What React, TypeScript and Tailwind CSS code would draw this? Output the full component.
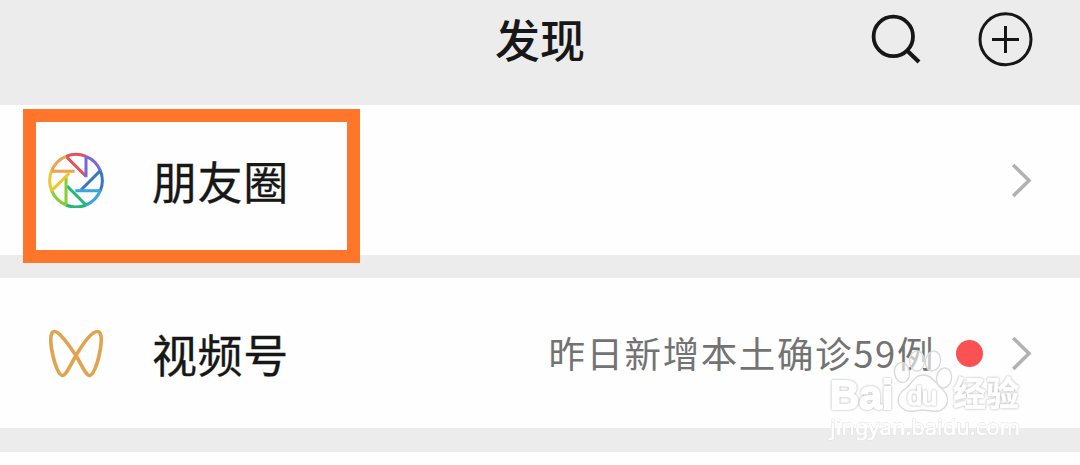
import React from "react";

type RowProps = {
  icon: React.ReactNode;
  title: string;
  children?: React.ReactNode;
};

const SearchIcon = () => (
  <svg className="w-[50px] h-[52px]" viewBox="0 0 50 52" fill="none" stroke="#161616">
    <circle cx="22.3" cy="24.4" r="19.7" strokeWidth="3.8" />
    <path d="M36 38.5L48 50" strokeWidth="4.2" />
  </svg>
);

const PlusIcon = () => (
  <svg className="w-[56px] h-[56px]" viewBox="0 0 56 56" fill="none" stroke="#161616" strokeWidth="3">
    <circle cx="27.5" cy="27.3" r="25.5" />
    <path d="M14 27.5H41M27.5 14V41" />
  </svg>
);

const Chevron = () => (
  <svg className="w-[22px] h-[36px]" viewBox="0 0 22 36" fill="none" stroke="#b2b2b2" strokeWidth="3.6">
    <path d="M2.2 3L18 18.5L2.2 34" />
  </svg>
);

const MomentsIcon = () => (
  <svg className="w-[56px] h-[56px]" viewBox="40 36 168 168" fill="none" strokeWidth="9">
    <path d="M94 49A79 79 0 0 1 154 49M94 49L153 108" stroke="#df5359" />
    <path d="M154 49A79 79 0 0 1 197 92M154 49V112" stroke="#7b66d6" />
    <path d="M197 92A79 79 0 0 1 197 152M197 92L139 150" stroke="#3878be" />
    <path d="M197 152A79 79 0 0 1 154 195M197 152H122" stroke="#39a5df" />
    <path d="M154 195A79 79 0 0 1 94 195M154 195L97 138" stroke="#23b779" />
    <path d="M94 195A79 79 0 0 1 51 152M94 195V108" stroke="#86ce35" />
    <path d="M51 152A79 79 0 0 1 51 92M51 152L104 99" stroke="#efc62e" />
    <path d="M51 92A79 79 0 0 1 94 49M51 94H120" stroke="#eda34d" />
  </svg>
);

const ChannelsIcon = () => (
  <svg className="w-[56px] h-[50px]" viewBox="0 0 56 50" fill="none" stroke="#e2a34e" strokeWidth="3.6" strokeLinejoin="round">
    <path d="M28 27.5C22 19 12 3.5 6.5 3.5C1 3.5 2.5 18 5 28C7 37 11 47.5 14.5 47.5C18 47.5 23 36 28 27.5C33 19 43 3.5 49.5 3.5C55 3.5 53.5 18 51 28C49 37 45 47.5 41.5 47.5C38 47.5 33 36 28 27.5Z" />
  </svg>
);

const Row: React.FC<RowProps> = ({ icon, title, children }) => (
  <div className="h-[150px] shrink-0 bg-[#fefefe] flex items-center pl-12 pr-[47px]">
    {icon}
    <span className="ml-12 pt-2.5 text-[45px] leading-[60px] tracking-[0.6px] text-[#171717] [-webkit-text-stroke:0.3px_#171717]">{title}</span>
    <div className="ml-auto flex items-center">
      {children}
      <Chevron />
    </div>
  </div>
);

const Watermark = () => (
  <svg
    className="absolute left-[820px] top-[345px] w-[210px] h-[105px]"
    viewBox="820 345 210 105"
    fill="#ffffff"
    strokeLinejoin="round"
  >
    <g fillOpacity="0.6" stroke="#dadada" strokeWidth="1.4">
      <ellipse cx="902" cy="372.5" rx="7.5" ry="10" transform="rotate(-8 902 372.5)" />
      <ellipse cx="917" cy="361" rx="7.5" ry="10" />
      <ellipse cx="933" cy="361" rx="7.5" ry="10" transform="rotate(12 933 361)" />
      <ellipse cx="944" cy="378" rx="7.5" ry="10" transform="rotate(10 944 378)" />
      <path d="M923 375C914 375 913 383 905 389C897 395 896 403 902 408C909 414 915 410 923 410C931 410 938 414 944 408C950 402 948 394 941 388C934 382 932 375 923 375Z" />
    </g>
    <g className="[filter:drop-shadow(0_0_0.8px_#aaaaaa)]" stroke="#ffffff" fontWeight="700">
      <text x="830" y="409" fontSize="41" strokeWidth="2" textLength="63" lengthAdjust="spacingAndGlyphs">Bai</text>
      <text x="907" y="405" fontSize="26" fontWeight="400" strokeWidth="1.6" textLength="30" lengthAdjust="spacingAndGlyphs">du</text>
      <text x="953" y="406" fontSize="34" strokeWidth="0.6" textLength="66" lengthAdjust="spacingAndGlyphs">经验</text>
    </g>
    <text
      x="830"
      y="434.5"
      className="font-['Noto_Sans',sans-serif] [filter:drop-shadow(0_0_0.7px_#b4b4b4)]"
      fontSize="22"
      stroke="#ffffff"
      strokeWidth="0.9"
      textLength="190"
      lengthAdjust="spacingAndGlyphs"
    >
      jingyan.baidu.com
    </text>
  </svg>
);

export default function App() {
  return (
    <main className="relative w-[1080px] h-[465px] overflow-hidden bg-[#ececec] flex flex-col font-['Liberation_Sans','Noto_Sans_CJK_SC',sans-serif]">
      <header className="h-[105px] shrink-0 grid grid-cols-[1fr_auto_1fr] items-start">
        <h1 className="col-start-2 pt-[13px] text-[45px] leading-[60px] font-medium text-[#171717]">发现</h1>
        <div className="flex justify-end items-start pr-[46px] pt-3 gap-[57px]">
          <SearchIcon />
          <PlusIcon />
        </div>
      </header>

      <div className="flex flex-col gap-[23px]">
        <Row icon={<MomentsIcon />} title="朋友圈" />
        <Row icon={<ChannelsIcon />} title="视频号">
          <span className="text-[36.5px] leading-[50px] tracking-[1.6px] text-[#737373] font-['Noto_Sans_CJK_SC',sans-serif]">
            昨日新增本土确诊59例
          </span>
          <span className="ml-[21px] mr-[28px] w-[27px] h-[27px] rounded-full bg-[#fa5252]" />
        </Row>
      </div>
      <div className="mt-6 h-[13px] bg-[#fefefe]" />

      <div className="absolute left-[23px] top-[109px] w-[337px] h-[154px] border-[13px] border-[#ff762b]" />
      <Watermark />
    </main>
  );
}
